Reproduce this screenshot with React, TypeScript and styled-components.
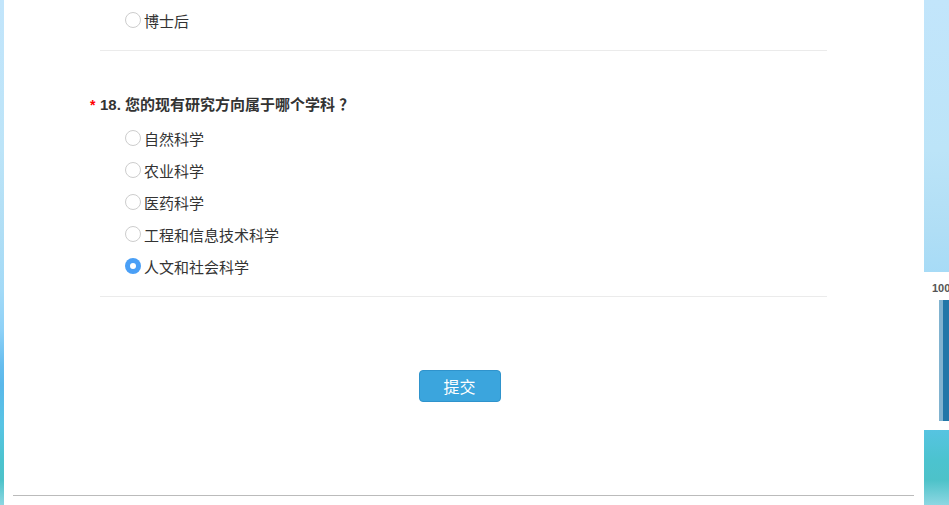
import React, { useState } from "react";
import styled, { createGlobalStyle } from "styled-components";

const Global = createGlobalStyle`
  html, body {
    margin: 0;
    padding: 0;
    height: 100%;
    overflow: hidden;
  }
  body {
    font-family: "Liberation Sans", "Noto Sans CJK SC", sans-serif;
    background: linear-gradient(
      180deg,
      #c2e5fb 0px,
      #bce4f8 150px,
      #b0def5 230px,
      #a3daf7 290px,
      #8ed1f7 330px,
      #66bdee 365px,
      #5ab8ea 385px,
      #58c4e4 425px,
      #4cc3cf 460px,
      #4dc2c9 480px,
      #8dd7e2 505px
    );
  }
`;

const Page = styled.div`
  display: flex;
  height: 505px;
  padding-left: 4px;
  width: 945px;
  position: relative;
`;

const Panel = styled.main`
  width: 920px;
  height: 505px;
  background: #fff;
  display: flex;
  flex-direction: column;
  align-items: center;
`;

const Column = styled.div`
  width: 727px;
  margin-left: -1px;
  display: flex;
  flex-direction: column;
`;

const Section = styled.section<{ $top: number; $bottom: number }>`
  padding: ${(p) => p.$top}px 0 ${(p) => p.$bottom}px;
  border-bottom: 1px solid #ebebeb;
`;

const Title = styled.h3`
  margin: 0 0 7px -10px;
  font-size: 15px;
  line-height: 20px;
  font-weight: bold;
  color: #333;
  display: flex;
  align-items: center;
`;

const Star = styled.span`
  color: #f00;
  width: 10px;
  font-size: 14px;
`;

const Options = styled.div`
  display: flex;
  flex-direction: column;
  padding-left: 25px;
`;

const Option = styled.label`
  display: flex;
  align-items: center;
  height: 32px;
  font-size: 15px;
  color: #333;
  cursor: pointer;
`;

const Circle = styled.span<{ $checked: boolean }>`
  box-sizing: border-box;
  width: 16px;
  height: 16px;
  border-radius: 50%;
  margin-right: 3px;
  border: ${(p) => (p.$checked ? "none" : "1.5px solid #cdcdcd")};
  background: ${(p) => (p.$checked ? "#4a9ff6" : "#fff")};
  display: flex;
  align-items: center;
  justify-content: center;
  &::after {
    content: "";
    display: ${(p) => (p.$checked ? "block" : "none")};
    width: 6px;
    height: 6px;
    border-radius: 50%;
    background: #fff;
  }
`;

const SubmitRow = styled.div`
  display: flex;
  justify-content: center;
  margin-top: 73px;
  margin-left: -9px;
`;

const Submit = styled.button`
  width: 82px;
  height: 32px;
  border-radius: 4px;
  border: 1px solid #2f93cc;
  background: #3ba5dd;
  color: #fff;
  font-family: "Liberation Sans", "Noto Sans CJK SC", sans-serif;
  font-size: 16px;
  cursor: pointer;
`;

const BottomLine = styled.div`
  width: 901px;
  margin-top: 93px;
  margin-left: -2px;
  border-top: 1px solid #bbbbbb;
`;

const Widget = styled.aside`
  position: absolute;
  left: 924px;
  top: 272px;
  width: 60px;
  height: 158px;
  background: #fff;
  display: flex;
  flex-direction: column;
  padding-left: 8px;
  box-sizing: border-box;
`;

const WidgetLabel = styled.span`
  margin-top: 10px;
  font-size: 11px;
  font-weight: bold;
  line-height: 12px;
  color: #555;
`;

const Bar = styled.div`
  margin: 6px 0 0 7px;
  height: 121px;
  width: 30px;
  background: #2277a8;
  border-left: 4px solid #80b3d0;
  box-sizing: border-box;
`;

const prevOptions = ["博士后"];
const options = ["自然科学", "农业科学", "医药科学", "工程和信息技术科学", "人文和社会科学"];

export default function App() {
  const [selected, setSelected] = useState(4);
  return (
    <>
      <Global />
      <Page>
        <Panel>
          <Column>
            <Section $top={4} $bottom={14}>
              <Options>
                {prevOptions.map((o) => (
                  <Option key={o}>
                    <Circle $checked={false} />
                    {o}
                  </Option>
                ))}
              </Options>
            </Section>
            <Section $top={44} $bottom={14}>
              <Title>
                <Star>*</Star>18. 您的现有研究方向属于哪个学科 ？
              </Title>
              <Options>
                {options.map((o, i) => (
                  <Option key={o} onClick={() => setSelected(i)}>
                    <Circle $checked={selected === i} />
                    {o}
                  </Option>
                ))}
              </Options>
            </Section>
          </Column>
          <SubmitRow>
            <Submit>提交</Submit>
          </SubmitRow>
          <BottomLine />
        </Panel>
        <Widget>
          <WidgetLabel>100</WidgetLabel>
          <Bar />
        </Widget>
      </Page>
    </>
  );
}
